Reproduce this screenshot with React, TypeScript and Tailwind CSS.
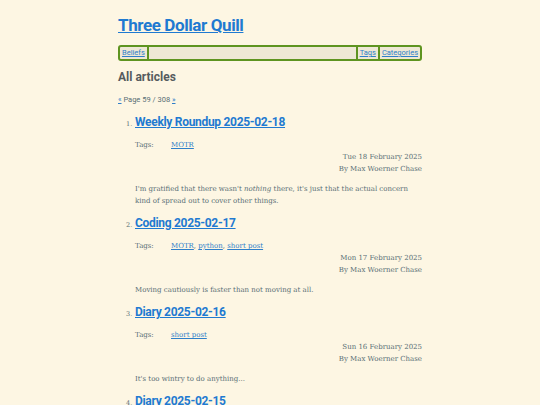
const heading = "font-['Roboto','Noto_Sans',sans-serif]";
const body = "font-['DejaVu_Serif','Liberation_Serif',serif]";

type Post = {
  title: string;
  tags: string[];
  date: string;
  text: React.ReactNode;
};

const posts: Post[] = [
  {
    title: "Weekly Roundup 2025-02-18",
    tags: ["MOTR"],
    date: "Tue 18 February 2025",
    text: (
      <>
        I'm gratified that there wasn't <em>nothing</em> there, it's just that the actual concern kind of
        spread out to cover other things.
      </>
    ),
  },
  {
    title: "Coding 2025-02-17",
    tags: ["MOTR", "python", "short post"],
    date: "Mon 17 February 2025",
    text: "Moving cautiously is faster than not moving at all.",
  },
  {
    title: "Diary 2025-02-16",
    tags: ["short post"],
    date: "Sun 16 February 2025",
    text: "It's too wintry to do anything...",
  },
  {
    title: "Diary 2025-02-15",
    tags: ["short post"],
    date: "Sat 15 February 2025",
    text: "Not much going on.",
  },
];

export default function App() {
  return (
    <div className="min-h-screen h-[405px] overflow-hidden bg-[#fdf6e3] text-[#586e75]">
      <div className="w-[304px] mx-auto pt-[14px]">
        <h1 className={`${heading} text-[17px] font-bold leading-[22px] tracking-[-0.4px]`}>
          <a href="#" className="text-[#1f7ad1] underline">Three Dollar Quill</a>
        </h1>

        {/* nav bar */}
        <nav className={`${heading} mt-[9px] h-[16px] flex items-stretch border-2 border-[#5e9420] rounded-[3px] bg-[#eee8d5] text-[7.5px] leading-[12px]`}>
          <a href="#" className="px-[2px] text-[#2f7fc9] underline">Beliefs</a>
          <span className="w-[2px] bg-[#5e9420]" />
          <span className="flex-1" />
          <span className="w-[2px] bg-[#5e9420]" />
          <a href="#" className="px-[2px] text-[#2f7fc9] underline">Tags</a>
          <span className="w-[2px] bg-[#5e9420]" />
          <a href="#" className="px-[2px] text-[#2f7fc9] underline">Categories</a>
        </nav>

        <h2 className={`${heading} mt-[8px] text-[12px] font-bold leading-[16px] text-[#555b5e]`}>All articles</h2>

        <p className={`${heading} mt-[9px] text-[7.5px] leading-[12px]`}>
          <a href="#" className="text-[#2f7fc9] underline">«</a> Page 59 / 308{" "}
          <a href="#" className="text-[#2f7fc9] underline">»</a>
        </p>

        <ol className="mt-[7px] pl-[17px]">
          {posts.map((p, i) => (
            <li key={p.title} className="mb-[7px]">
              <div className="flex items-baseline">
                <span className={`${body} w-[9px] -ml-[9px] text-[6.5px] text-[#586e75]`}>{i + 1}.</span>
                <a href="#" className={`${heading} text-[12px] font-bold leading-[18px] tracking-[-0.3px] text-[#1f7ad1] underline`}>
                  {p.title}
                </a>
              </div>
              <div className={`${body} text-[7px] leading-[12px]`}>
                <div className="mt-[8px] flex">
                  <span className="w-[36px]">Tags:</span>
                  <span>
                    {p.tags.map((t, j) => (
                      <span key={t}>
                        <a href="#" className="text-[#2f7fc9] underline">{t}</a>
                        {j < p.tags.length - 1 ? ", " : ""}
                      </span>
                    ))}
                  </span>
                </div>
                <div className="text-right">{p.date}</div>
                <div className="text-right">By Max Woerner Chase</div>
                <p className="mt-[8px] pr-[10px]">{p.text}</p>
              </div>
            </li>
          ))}
        </ol>
      </div>
    </div>
  );
}
